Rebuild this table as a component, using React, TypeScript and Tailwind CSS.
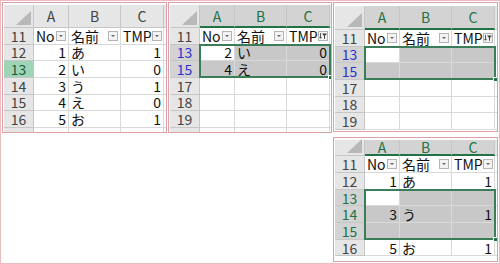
import React from 'react';

type RowDef = {
    n: string;
    num?: 'green' | 'blue' | 'sel';
    a?: string;
    b?: string;
    c?: string;
    fill?: boolean;
    active?: boolean;
};

const line = 'border-[#d9d9d9]';

const DropBtn = ({filtered}: {filtered?: boolean}) => (
    <span className="ml-auto mr-[2px] flex h-[10px] w-[10px] shrink-0 items-center justify-center border border-[#b4b4b4] bg-[#f3f3f3]">
        {filtered ? (
            <svg width="8" height="8" viewBox="0 0 8 8">
                <path d="M3 1.5h5L6 4v3l-1-.6V4z" fill="#444" />
                <path d="M1.5 1v5M0.5 5l1 1.3 1-1.3" stroke="#444" strokeWidth="0.9" fill="none" />
            </svg>
        ) : (
            <svg width="6" height="4" viewBox="0 0 6 4">
                <path d="M1 1h4L3 3z" fill="#666" />
            </svg>
        )}
    </span>
);

const HeaderRow = ({colSel, h}: {colSel?: boolean; h: string}) => {
    const col = colSel
        ? 'bg-[#d3d3d3] text-[#217346] border-b-2 border-b-[#217346]'
        : 'bg-[#e6e6e6] text-[#444] border-b border-b-[#c6c6c6]';
    return (
        <div className={`flex shrink-0 ${h}`}>
            <div className="relative w-[30px] shrink-0 border-r border-b border-[#c6c6c6] bg-[#e6e6e6]">
                <svg className="absolute right-[2px] bottom-[2px]" width="15" height="14" viewBox="0 0 15 14">
                    <path d="M15 0v14H0z" fill="#b8b8b8" />
                </svg>
            </div>
            <div className={`flex w-[35px] shrink-0 items-center justify-center border-r border-r-[#c6c6c6] ${col}`}>A</div>
            <div className={`flex w-[52px] shrink-0 items-center justify-center border-r border-r-[#c6c6c6] ${col}`}>B</div>
            <div className={`flex w-[43px] shrink-0 items-center justify-center border-r border-r-[#c6c6c6] ${col}`}>C</div>
            <div className="flex-1 border-b border-[#c6c6c6] bg-[#e6e6e6]" />
        </div>
    );
};

const TitleRow = ({filtered}: {filtered?: boolean}) => (
    <div className="flex h-[16.67px] shrink-0">
        <div className="flex w-[30px] shrink-0 items-center justify-center border-r border-b border-[#c6c6c6] bg-[#e6e6e6] text-[#444]">
            11
        </div>
        <div className={`flex w-[35px] shrink-0 items-center border-r border-b pl-[2px] ${line}`}>
            No
            <DropBtn />
        </div>
        <div className={`flex w-[52px] shrink-0 items-center border-r border-b pl-[2px] ${line}`}>
            名前
            <DropBtn />
        </div>
        <div className={`flex w-[43px] shrink-0 items-center border-r border-b pl-[2px] ${line}`}>
            TMP
            <DropBtn filtered={filtered} />
        </div>
        <div className={`flex-1 border-b ${line}`} />
    </div>
);

const Row = ({r}: {r: RowDef}) => {
    const head =
        r.num === 'green'
            ? 'bg-[#9fd5b7] text-[#1d5a38]'
            : r.num === 'blue'
              ? 'bg-[#d3d3d3] text-[#2f2fd0]'
              : r.num === 'sel'
                ? 'bg-[#d3d3d3] text-[#217346]'
                : 'bg-[#e6e6e6] text-[#444]';
    const fill = r.fill ? 'bg-[#c8c8c8]' : 'bg-white';
    const aFill = r.fill && !r.active ? 'bg-[#c8c8c8]' : 'bg-white';
    return (
        <div className="flex h-[16.67px] shrink-0">
            <div className={`flex w-[30px] shrink-0 items-center justify-center border-r border-b border-[#c6c6c6] ${head}`}>
                {r.n}
            </div>
            <div className={`flex w-[35px] shrink-0 items-center justify-end border-r border-b pr-[2px] ${line} ${aFill}`}>
                {r.a}
            </div>
            <div className={`flex w-[52px] shrink-0 items-center border-r border-b pl-[2px] ${line} ${fill}`}>
                {r.b}
            </div>
            <div className={`flex w-[43px] shrink-0 items-center justify-end border-r border-b pr-[2px] ${line} ${fill}`}>
                {r.c}
            </div>
            <div className={`flex-1 border-b ${line}`} />
        </div>
    );
};

const Sheet = ({
    className,
    headH,
    colSel,
    filtered,
    top,
    sel,
    bottom,
}: {
    className: string;
    headH: string;
    colSel?: boolean;
    filtered?: boolean;
    top: RowDef[];
    sel?: RowDef[];
    bottom: RowDef[];
}) => (
    <div className={`flex flex-col overflow-hidden border border-[#dca0a6] bg-white pl-px ${className}`}>
        <HeaderRow colSel={colSel} h={headH} />
        <TitleRow filtered={filtered} />
        {top.map(r => (
            <Row key={r.n} r={r} />
        ))}
        {sel && (
            <div className="relative shrink-0">
                {sel.map(r => (
                    <Row key={r.n} r={r} />
                ))}
                <div className="pointer-events-none absolute top-[-1px] bottom-0 left-[29px] w-[132px] border-2 border-[#3b7d58]">
                    <span className="absolute right-[-4px] bottom-[-4px] h-[5px] w-[5px] border border-white bg-[#217346]" />
                </div>
            </div>
        )}
        {bottom.map(r => (
            <Row key={r.n} r={r} />
        ))}
    </div>
);

export default function App() {
    return (
        <div className="flex h-[264px] w-[500px] gap-px overflow-hidden border border-[#ecbcc0] bg-white p-px font-['Noto_Sans_CJK_JP',sans-serif] text-[14px] leading-none text-[#111]">
            <Sheet
                className="h-[131px] w-[166px] pt-[2px]"
                headH="h-[23px]"
                top={[
                    {n: '12', a: '1', b: 'あ', c: '1'},
                    {n: '13', num: 'green', a: '2', b: 'い', c: '0'},
                    {n: '14', a: '3', b: 'う', c: '1'},
                    {n: '15', a: '4', b: 'え', c: '0'},
                    {n: '16', a: '5', b: 'お', c: '1'},
                    {n: '17'},
                ]}
                bottom={[]}
            />
            <Sheet
                className="h-[131px] w-[165px] pt-[2px]"
                headH="h-[23px]"
                colSel
                filtered
                top={[]}
                sel={[
                    {n: '13', num: 'blue', a: '2', b: 'い', c: '0', fill: true, active: true},
                    {n: '15', num: 'blue', a: '4', b: 'え', c: '0', fill: true},
                ]}
                bottom={[{n: '17'}, {n: '18'}, {n: '19'}, {n: '20'}]}
            />
            <div className="flex w-[165px] flex-col gap-[5px]">
                <Sheet
                    className="h-[131px] w-[165px] pt-[3px]"
                    headH="h-[24px]"
                    colSel
                    filtered
                    top={[]}
                    sel={[
                        {n: '13', num: 'blue', fill: true, active: true},
                        {n: '15', num: 'blue', fill: true},
                    ]}
                    bottom={[{n: '17'}, {n: '18'}, {n: '19'}]}
                />
                <Sheet
                    className="h-[125px] w-[165px] pt-[2px]"
                    headH="h-[16px]"
                    colSel
                    top={[{n: '12', a: '1', b: 'あ', c: '1'}]}
                    sel={[
                        {n: '13', num: 'sel', fill: true, active: true},
                        {n: '14', num: 'sel', a: '3', b: 'う', c: '1', fill: true},
                        {n: '15', num: 'sel', fill: true},
                    ]}
                    bottom={[{n: '16', a: '5', b: 'お', c: '1'}]}
                />
            </div>
        </div>
    );
}
